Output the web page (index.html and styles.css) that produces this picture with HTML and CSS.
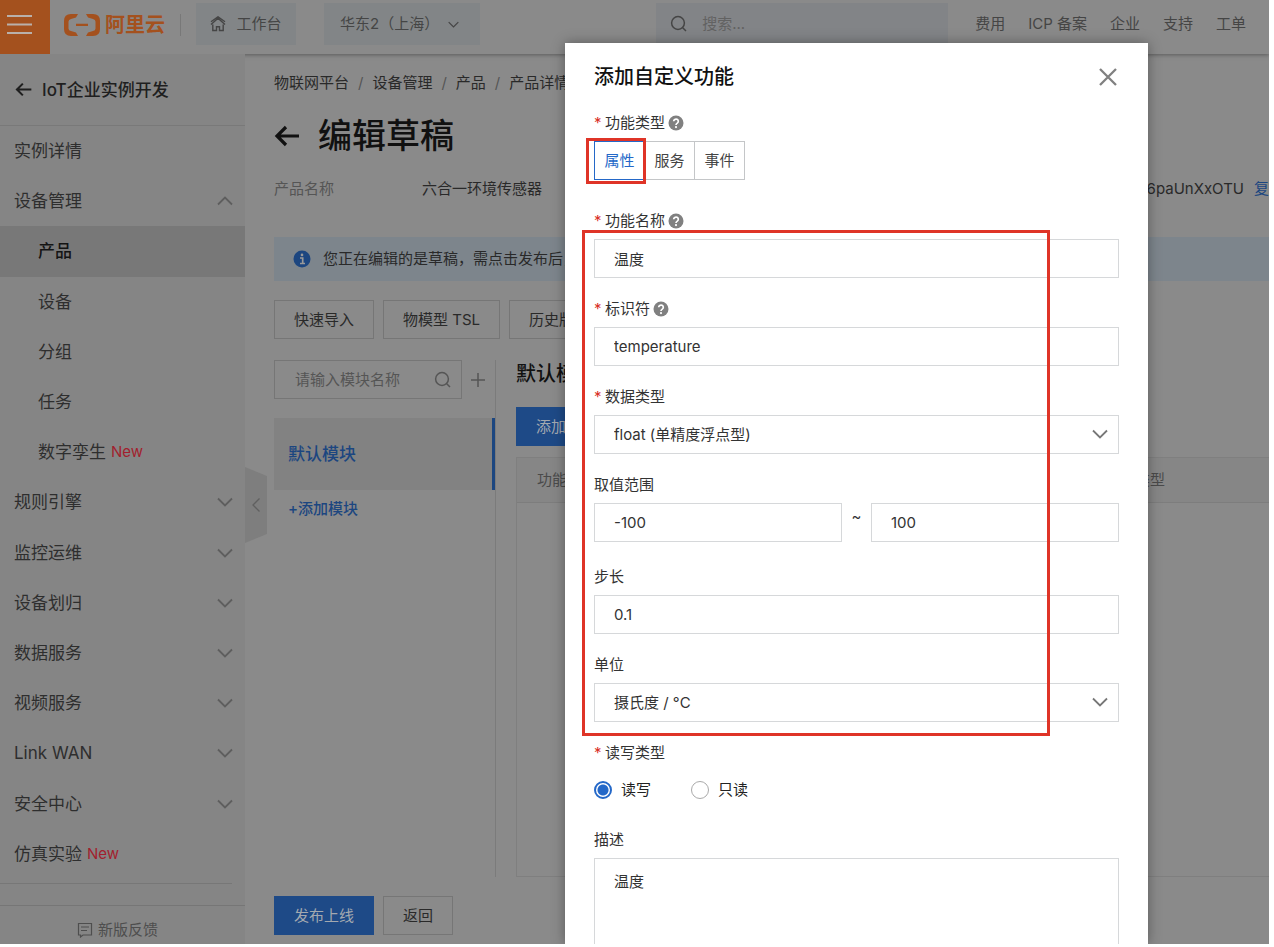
FILE: index.html
```html
<!DOCTYPE html>
<html lang="zh-CN">
<head>
<meta charset="utf-8">
<title>添加自定义功能</title>
<link rel="stylesheet" href="styles.css">
</head>
<body>
<svg class="defs" aria-hidden="true">
  <symbol id="down" viewBox="0 0 16 10"><path d="M1 1.5 8 8.5 15 1.5" fill="none" stroke="currentColor" stroke-width="1.8"/></symbol>
  <symbol id="search" viewBox="0 0 18 18"><circle cx="8" cy="8" r="6.4" fill="none" stroke="currentColor" stroke-width="1.5"/><path d="m12.7 12.7 3.3 3.3" stroke="currentColor" stroke-width="1.5"/></symbol>
  <symbol id="back" viewBox="0 0 26 22"><path d="M12 2 3 11l9 9M3 11h22" fill="none" stroke="currentColor" stroke-width="3.2"/></symbol>
  <symbol id="help" viewBox="0 0 16 16"><circle cx="8" cy="8" r="7.5" fill="#808080"/><path d="M5.7 6.3a2.3 2.2 0 1 1 3.6 1.8C8.400 8.700 8 9 8 10" fill="none" stroke="#fff" stroke-width="1.7"/><circle cx="8" cy="12.1" r="1.1" fill="#fff"/></symbol>
</svg>
<div class="app">
  <header class="topbar">
    <button class="menu" type="button" aria-label="菜单"><svg viewBox="0 0 26 22"><path d="M0 2h25M0 10.500h25M0 19h25" stroke="#b9b0aa" stroke-width="2"/></svg></button>
    <a class="logo" href="#">
      <svg viewBox="0 0 36 24"><path d="M14 1H7Q0 1 0 8v8q0 7 7 7h7l-2-3.500-5-1.500Q4.500 17.500 4.500 15.500v-7Q4.500 6.500 7 6l5-1.500ZM22 1h7q7 0 7 7v8q0 7-7 7h-7l2-3.500 5-1.500q2.500-.5 2.500-2.500v-7Q31.500 6.500 29 6l-5-1.500ZM12 10.700h12v2.400H12Z" fill="#a4511e"/></svg>
      <span>阿里云</span>
    </a>
    <span class="rule"></span>
    <a class="workbench" href="#"><svg viewBox="0 0 16 16"><path d="M1 8.500 8 2.300l7 6.200M2.800 8.500v6h3.700v-3.700h3v3.700h3.700v-6M1 5.700 8 .8l7 4.900" fill="none" stroke="currentColor" stroke-width="1.400"/></svg>工作台</a>
    <div class="region"><select aria-label="地域"><option>华东2（上海）</option></select><svg class="chev"><use href="#down"/></svg></div>
    <label class="find"><svg><use href="#search"/></svg><input type="text" placeholder="搜索..." aria-label="搜索"></label>
    <nav class="links"><a href="#">费用</a><a href="#">ICP 备案</a><a href="#">企业</a><a href="#">支持</a><a href="#">工单</a></nav>
  </header>

  <div class="body">
    <aside class="side">
      <a class="side-title" href="#"><svg><use href="#back"/></svg>IoT企业实例开发</a>
      <nav class="tree">
        <a href="#">实例详情</a>
        <a href="#">设备管理<svg class="up"><use href="#down"/></svg></a>
        <a class="sub active" href="#">产品</a>
        <a class="sub" href="#">设备</a>
        <a class="sub" href="#">分组</a>
        <a class="sub" href="#">任务</a>
        <a class="sub" href="#">数字孪生<em>New</em></a>
        <a href="#">规则引擎<svg><use href="#down"/></svg></a>
        <a href="#">监控运维<svg><use href="#down"/></svg></a>
        <a href="#">设备划归<svg><use href="#down"/></svg></a>
        <a href="#">数据服务<svg><use href="#down"/></svg></a>
        <a href="#">视频服务<svg><use href="#down"/></svg></a>
        <a href="#">Link WAN<svg><use href="#down"/></svg></a>
        <a href="#">安全中心<svg><use href="#down"/></svg></a>
        <a href="#">仿真实验<em>New</em></a>
      </nav>
      <div class="tree-end"></div>
      <a class="feedback" href="#"><svg viewBox="0 0 16 16"><path d="M1.500 1.500h13v11.500H6l-2.500 2v-2h-2ZM4 5h8M4 8.500h6" fill="none" stroke="currentColor" stroke-width="1.200"/></svg>新版反馈</a>
      <button class="collapse" type="button" aria-label="收起"><svg viewBox="0 0 10 16"><path d="M8.500 1.500 2 8l6.500 6.500" fill="none" stroke="currentColor" stroke-width="1.300"/></svg></button>
    </aside>

    <main class="main">
      <nav class="crumbs"><a href="#">物联网平台</a><i>/</i><a href="#">设备管理</a><i>/</i><a href="#">产品</a><i>/</i><a href="#">产品详情</a></nav>
      <div class="heading"><svg><use href="#back"/></svg><h1>编辑草稿</h1></div>
      <div class="meta"><span class="muted">产品名称</span><span>六合一环境传感器</span><span class="key">g6paUnXxOTU</span><a href="#">复</a></div>
      <div class="notice"><svg viewBox="0 0 18 18"><circle cx="9" cy="9" r="8.500" fill="#1c4680"/><path d="M7 8h2.700v5.200M7 13.500h5" fill="none" stroke="#999" stroke-width="1.700"/><circle cx="9" cy="4.900" r="1.300" fill="#999"/></svg>您正在编辑的是草稿，需点击发布后，</div>
      <div class="tools"><button type="button">快速导入</button><button type="button">物模型 TSL</button><button type="button">历史版本</button></div>
      <div class="panes">
        <section class="modules">
          <div class="module-find">
            <label class="module-box"><input type="text" placeholder="请输入模块名称" aria-label="模块名称"><svg><use href="#search"/></svg></label>
            <button type="button" class="plus" aria-label="添加"><svg viewBox="0 0 14 14"><path d="M7 0v14M0 7h14" stroke="currentColor" stroke-width="1.500"/></svg></button>
          </div>
          <a class="module" href="#">默认模块</a>
          <a class="module-add" href="#">+添加模块</a>
        </section>
        <section class="detail">
          <h2>默认模块</h2>
          <button class="primary" type="button">添加自定义功能</button>
          <div class="table-box"><table><thead><tr><th>功能类型</th><th class="last">数据类型</th></tr></thead></table></div>
        </section>
      </div>
      <div class="actions"><button class="primary" type="button">发布上线</button><button type="button">返回</button></div>
    </main>
  </div>

  <div class="dialog" role="dialog" aria-labelledby="dialog-title">
    <div class="dialog-head"><h2 id="dialog-title">添加自定义功能</h2><button type="button" aria-label="关闭"><svg viewBox="0 0 18 18"><path d="m1 1 16 16M17 1 1 17" stroke="#808080" stroke-width="2.300"/></svg></button></div>
    <form class="form">
      <div class="field wide-gap">
        <div class="label"><b>*</b>功能类型<svg><use href="#help"/></svg></div>
        <div class="tabs"><button class="on" type="button">属性</button><button type="button">服务</button><button type="button">事件</button></div>
      </div>
      <div class="field">
        <label class="label" for="name"><b>*</b>功能名称<svg><use href="#help"/></svg></label>
        <input class="box" id="name" type="text" value="温度">
      </div>
      <div class="field">
        <label class="label" for="ident"><b>*</b>标识符<svg><use href="#help"/></svg></label>
        <input class="box" id="ident" type="text" value="temperature">
      </div>
      <div class="field">
        <label class="label" for="type"><b>*</b>数据类型</label>
        <div class="pick"><select class="box" id="type"><option>float (单精度浮点型)</option></select><svg class="chev"><use href="#down"/></svg></div>
      </div>
      <div class="field range-field">
        <label class="label" for="min">取值范围</label>
        <div class="range"><input class="box" id="min" type="text" value="-100"><span>~</span><input class="box" type="text" value="100" aria-label="最大值"></div>
      </div>
      <div class="field">
        <label class="label" for="step">步长</label>
        <input class="box" id="step" type="text" value="0.1">
      </div>
      <div class="field">
        <label class="label" for="unit">单位</label>
        <div class="pick"><select class="box" id="unit"><option>摄氏度 / °C</option></select><svg class="chev"><use href="#down"/></svg></div>
      </div>
      <div class="field">
        <div class="label"><b>*</b>读写类型</div>
        <div class="radios"><label><input type="radio" name="rw" checked>读写</label><label><input type="radio" name="rw">只读</label></div>
      </div>
      <div class="field grow">
        <label class="label" for="desc">描述</label>
        <textarea class="box" id="desc">温度</textarea>
      </div>
    </form>
    <div class="mark mark-tab"></div>
    <div class="mark mark-fields"></div>
  </div>
</div>
</body>
</html>
```
FILE: styles.css
```css
* { box-sizing: border-box; }
body {
  margin: 0;
  height: 100vh;
  padding: 0 5px 3px 0;
  background: #fff;
  font: 15px/22px Inter, "Noto Sans CJK SC", sans-serif;
  color: #292929;
  overflow: hidden;
}
a { color: inherit; text-decoration: none; }
h1, h2 { margin: 0; font-weight: 500; }
button, input, select, textarea { font: inherit; color: inherit; margin: 0; }
button { padding: 0; background: none; border: 0; border-radius: 0; }
input, select, textarea { border: 0; background: none; outline: 0; border-radius: 0; min-width: 0; }
select { appearance: none; }
svg { display: block; flex: none; }
.defs { position: absolute; width: 0; height: 0; }

.app { position: relative; height: 100%; display: flex; flex-direction: column; background: #8a8a8a; overflow: hidden; }

.topbar { flex: none; height: 54px; display: flex; align-items: flex-start; color: #454545; box-shadow: 0 1px 4px #5c5c5c; position: relative; white-space: nowrap; }
.menu { width: 50px; height: 54px; padding-left: 7px; background: #a4511e; }
.menu svg { width: 26px; height: 22px; margin-bottom: 4px; }
.logo { display: flex; align-items: center; gap: 5px; height: 49px; margin-left: 14px; color: #a4511e; font-size: 20px; font-weight: 700; }
.logo svg { width: 36px; height: 24px; }
.rule { width: 1px; height: 22px; margin: 14px 15px 0; background: #787878; }
.workbench { display: flex; align-items: center; justify-content: center; gap: 10px; width: 100px; height: 42px; margin-top: 3px; background: #828587; }
.workbench svg { width: 16px; height: 16px; }
.region { position: relative; width: 156px; height: 42px; margin: 3px 0 0 28px; background: #828587; }
.region select { width: 100%; height: 100%; padding-left: 16px; }
.region .chev { position: absolute; right: 21px; top: 18px; width: 11px; height: 7px; }
.find { display: flex; align-items: center; gap: 12px; flex: 0 1 292px; height: 42px; margin: 3px 0 0 auto; padding-left: 14px; background: #828487; }
.find svg { width: 18px; height: 18px; }
.find input { flex: 1; }
::placeholder { color: #626262; opacity: 1; }
.links { display: flex; gap: 23px; margin: 13px 23px 0 27px; }

.body { flex: 1; min-height: 0; display: flex; }
.side { position: relative; flex: none; width: 245px; display: flex; flex-direction: column; background: #858585; font-size: 17px; font-weight: 400; color: #2e2e2e; }
.side-title { display: flex; align-items: center; gap: 10px; height: 72px; padding-left: 15px; border-bottom: 1px solid #797979; color: #1f1f1f; font-weight: 500; font-size: 17px; }
.side-title svg { width: 17px; height: 15px; }
.tree { flex: 1; min-height: 0; display: grid; grid-auto-rows: 1fr; }
.tree a { display: flex; align-items: center; padding: 0 12px 0 14px; }
.tree a.sub { padding-left: 38px; }
.tree a.active { background: #787878; color: #141414; font-weight: 500; }
.tree em { margin-left: 5px; font-style: normal; font-size: 15px; color: #a21f2e; }
.tree svg { width: 16px; height: 10px; margin-left: auto; color: #5e5e5e; }
.tree .up { rotate: 180deg; }
.tree-end { height: 26px; padding-top: 4px; }
.tree-end::before { content: ""; display: block; width: 232px; height: 1px; background: #777; }
.feedback { display: flex; align-items: center; justify-content: center; gap: 5px; height: 39px; padding: 10px 10px 0 0; border-top: 1px solid #767676; font-size: 15px; color: #4e4e4e; }
.feedback svg { width: 16px; height: 16px; }
.collapse { position: absolute; left: 100%; top: 413px; width: 22px; height: 76px; padding-left: 6px; background: #7e7e7e; clip-path: polygon(0 0, 100% 12%, 100% 88%, 0 100%); color: #606060; }
.collapse svg { width: 10px; height: 16px; }

.main { flex: 1; min-width: 0; display: flex; flex-direction: column; padding: 18px 0 9px 29px; white-space: nowrap; overflow: hidden; }
.crumbs { display: flex; gap: 8px; }
.crumbs i { color: #555; font-style: normal; padding: 0 1px; }
.heading { display: flex; align-items: center; gap: 18px; height: 48px; margin-top: 18px; color: #111; }
.heading svg { width: 26px; height: 22px; }
.heading h1 { font-size: 34px; line-height: 48px; }
.meta { display: grid; grid-template-columns: 148px 1fr auto 15px; margin-top: 18px; }
.meta .muted { color: #555; }
.meta .key { margin-right: 10px; }
.meta a { color: #1c4680; }
.notice { display: flex; align-items: center; gap: 12px; height: 44px; margin-top: 37px; padding-left: 19px; background: #7d858c; }
.notice svg { width: 18px; height: 18px; }
.tools { display: flex; gap: 9px; margin-top: 19px; }
.tools button, .actions button { height: 39px; padding: 0 19px; border: 1px solid #767676; }
.panes { flex: 1; min-height: 0; display: flex; margin-top: 21px; }
.modules { flex: none; width: 222px; border-right: 1px solid #7b7b7b; }
.module-find { display: flex; height: 39px; }
.module-box { display: flex; align-items: center; width: 188px; padding: 0 9px 0 20px; border: 1px solid #767676; color: #555; }
.module-box input { flex: 1; padding: 0; }
.module-box ::placeholder { color: #555; }
.module-box svg { width: 18px; height: 18px; }
.plus { padding: 0 9px; color: #555; }
.plus svg { width: 14px; height: 14px; }
.module { display: flex; align-items: center; height: 72px; margin: 19px 0 8px; padding-left: 14px; background: #828282; border-right: 3px solid #1c4680; color: #1c4680; font-size: 17px; font-weight: 500; }
.module-add { padding-left: 14px; color: #1c4680; font-size: 15px; font-weight: 500; }
.detail { flex: 1; min-width: 0; display: flex; flex-direction: column; align-items: flex-start; padding-left: 20px; }
.detail h2 { font-size: 20px; line-height: 28px; color: #111; }
.primary { height: 39px; padding: 0 20px; background: #1e4a87; color: #a3a9b0; }
.detail .primary { margin: 19px 0 11px; }
.table-box { flex: 1; align-self: stretch; border: 1px solid #7f7f7f; border-right: 0; }
table { width: 100%; border-collapse: collapse; table-layout: fixed; }
th { height: 44px; padding: 0 0 0 20px; text-align: left; font-weight: 400; background: #868686; border-bottom: 1px solid #7d7d7d; color: #4a4a4a; }
th.last { width: 184px; }
.actions { display: flex; gap: 9px; margin-top: 19px; }
.actions .primary { border-color: #1e4a87; }

.dialog { position: absolute; top: 43px; right: 121px; bottom: 0; width: 583px; display: flex; flex-direction: column; padding: 20px 29px 0; background: #fff; box-shadow: 0 0 12px rgba(0, 0, 0, .35); color: #333; overflow: hidden; }
.dialog-head { display: flex; align-items: center; justify-content: space-between; height: 28px; }
.dialog-head h2 { font-size: 20px; line-height: 28px; color: #111; }
.dialog-head button { width: 20px; height: 28px; }
.dialog-head svg { width: 18px; height: 18px; }
.form { flex: 1; min-height: 0; display: flex; flex-direction: column; margin-top: 21px; }
.field { display: flex; flex-direction: column; gap: 7px; margin-bottom: 20px; }
.wide-gap { margin-bottom: 30px; }
.range-field { margin-bottom: 24px; }
.label { display: flex; align-items: center; height: 22px; }
.label b { width: 11px; font-weight: 400; color: #d93026; }
.label svg { width: 16px; height: 16px; margin-left: 3px; }
.box { width: 100%; height: 39px; padding: 0 19px; border: 1px solid #d6d8da; }
.pick { position: relative; }
.pick .chev { position: absolute; right: 11px; top: 14px; width: 16px; height: 10px; color: #777; }
.range { display: grid; grid-template-columns: 1fr 29px 1fr; }
.range span { text-align: center; line-height: 28px; }
.tabs { display: flex; height: 39px; }
.tabs button { width: 51px; margin-right: -1px; border: 1px solid #c4c6c8; color: #444; }
.tabs .on { position: relative; border-color: #2468c8; color: #2468c8; }
.radios { display: flex; gap: 40px; height: 38px; align-items: center; color: #222; }
.radios label { display: flex; align-items: center; gap: 9px; }
.radios input { appearance: none; width: 18px; height: 18px; border: 1px solid #aaa; border-radius: 50%; }
.radios input:checked { border: 2px solid #2468c8; background: radial-gradient(circle, #2468c8 5px, #fff 6px); }
.grow { flex: 1; min-height: 0; margin-bottom: 0; }
.grow .box { flex: 1; padding-top: 12px; border-bottom: 0; resize: none; }
.mark { position: absolute; border: 3px solid #df3427; pointer-events: none; }
.mark-tab { left: 21px; top: 95px; width: 60px; height: 46px; }
.mark-fields { left: 17px; top: 187px; width: 468px; height: 506px; }
```
